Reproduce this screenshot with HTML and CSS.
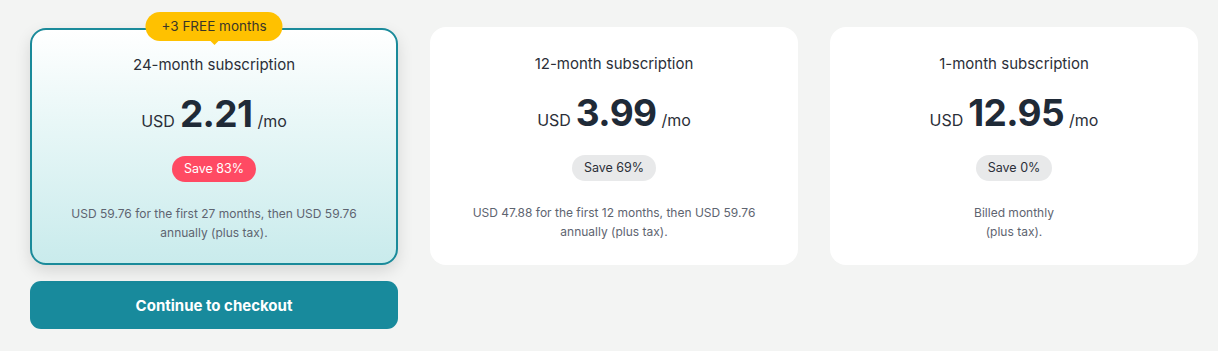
FILE: index.html
```html
<!DOCTYPE html>
<html lang="en">
<head>
<meta charset="utf-8">
<link rel="stylesheet" href="styles.css">
</head>
<body>
<div class="plans">
  <div class="col">
    <div class="card card--active">
      <div class="promo">+3 FREE months</div>
      <div class="title">24-month subscription</div>
      <div class="price"><span class="cur">USD</span><span class="amount">2.21</span><span class="per">/mo</span></div>
      <div class="pill pill--hot">Save 83%</div>
      <div class="desc">USD 59.76 for the first 27 months, then USD 59.76<br>annually (plus tax).</div>
    </div>
    <button class="cta">Continue to checkout</button>
  </div>
  <div class="col">
    <div class="card">
      <div class="title">12-month subscription</div>
      <div class="price"><span class="cur">USD</span><span class="amount">3.99</span><span class="per">/mo</span></div>
      <div class="pill">Save 69%</div>
      <div class="desc">USD 47.88 for the first 12 months, then USD 59.76<br>annually (plus tax).</div>
    </div>
  </div>
  <div class="col">
    <div class="card">
      <div class="title">1-month subscription</div>
      <div class="price"><span class="cur">USD</span><span class="amount">12.95</span><span class="per">/mo</span></div>
      <div class="pill">Save 0%</div>
      <div class="desc">Billed monthly<br>(plus tax).</div>
    </div>
  </div>
</div>
</body>
</html>
```

FILE: styles.css
```css
* { box-sizing: border-box; }
html, body { margin: 0; }
body {
  background: #f3f4f3;
  font-family: Inter, "Noto Sans", sans-serif;
  color: #2b2f38;
}
.plans {
  display: grid;
  grid-template-columns: repeat(3, 368px);
  column-gap: 32px;
  padding: 27px 0 0 30px;
  align-items: start;
}
.col {
  display: flex;
  flex-direction: column;
  gap: 16px;
}
.card {
  position: relative;
  background: #fff;
  border-radius: 16px;
  height: 238px;
  padding: 27px 20px 0;
  display: flex;
  flex-direction: column;
  align-items: center;
  text-align: center;
}
.card--active {
  border: 2px solid #1a8a9a;
  padding-top: 25px;
  background: linear-gradient(180deg, #ffffff 0%, #e8f7f7 40%, #c9ebec 100%);
  box-shadow: 0 6px 16px rgba(0, 0, 0, 0.12);
  margin-top: 1px;
  height: 237px;
}
.promo {
  position: absolute;
  top: -18px;
  left: 50%;
  transform: translateX(-50%);
  background: #ffc100;
  color: #3a3628;
  font-size: 13.5px;
  line-height: 29px;
  height: 29px;
  padding: 0 16px;
  border-radius: 15px;
  white-space: nowrap;
}
.promo::after {
  content: "";
  position: absolute;
  left: 50%;
  bottom: -4px;
  margin-left: -5px;
  border-left: 5px solid transparent;
  border-right: 5px solid transparent;
  border-top: 5px solid #ffc100;
}
.title {
  font-size: 15px;
  line-height: 20px;
  color: #2b2f38;
}
.price {
  margin-top: 15px;
  height: 48px;
  display: flex;
  align-items: baseline;
  justify-content: center;
  gap: 5px;
  line-height: 48px;
  color: #1f2a37;
}
.cur, .per {
  font-size: 16px;
  color: #2b2f38;
}
.amount {
  font-size: 37px;
  font-weight: 700;
  letter-spacing: -0.6px;
}
.pill {
  margin-top: 18px;
  height: 26px;
  line-height: 26px;
  padding: 0 12px;
  border-radius: 13px;
  background: #e8e9ea;
  color: #2b2f38;
  font-size: 12.5px;
}
.pill--hot {
  background: #ff4a63;
  color: #fff;
}
.desc {
  margin-top: 22px;
  font-size: 12px;
  line-height: 19px;
  color: #5e6470;
}
.cta {
  height: 48px;
  border: 0;
  border-radius: 11px;
  background: #188a9c;
  color: #fff;
  font-family: inherit;
  font-size: 15px;
  font-weight: 700;
  cursor: pointer;
}
```
